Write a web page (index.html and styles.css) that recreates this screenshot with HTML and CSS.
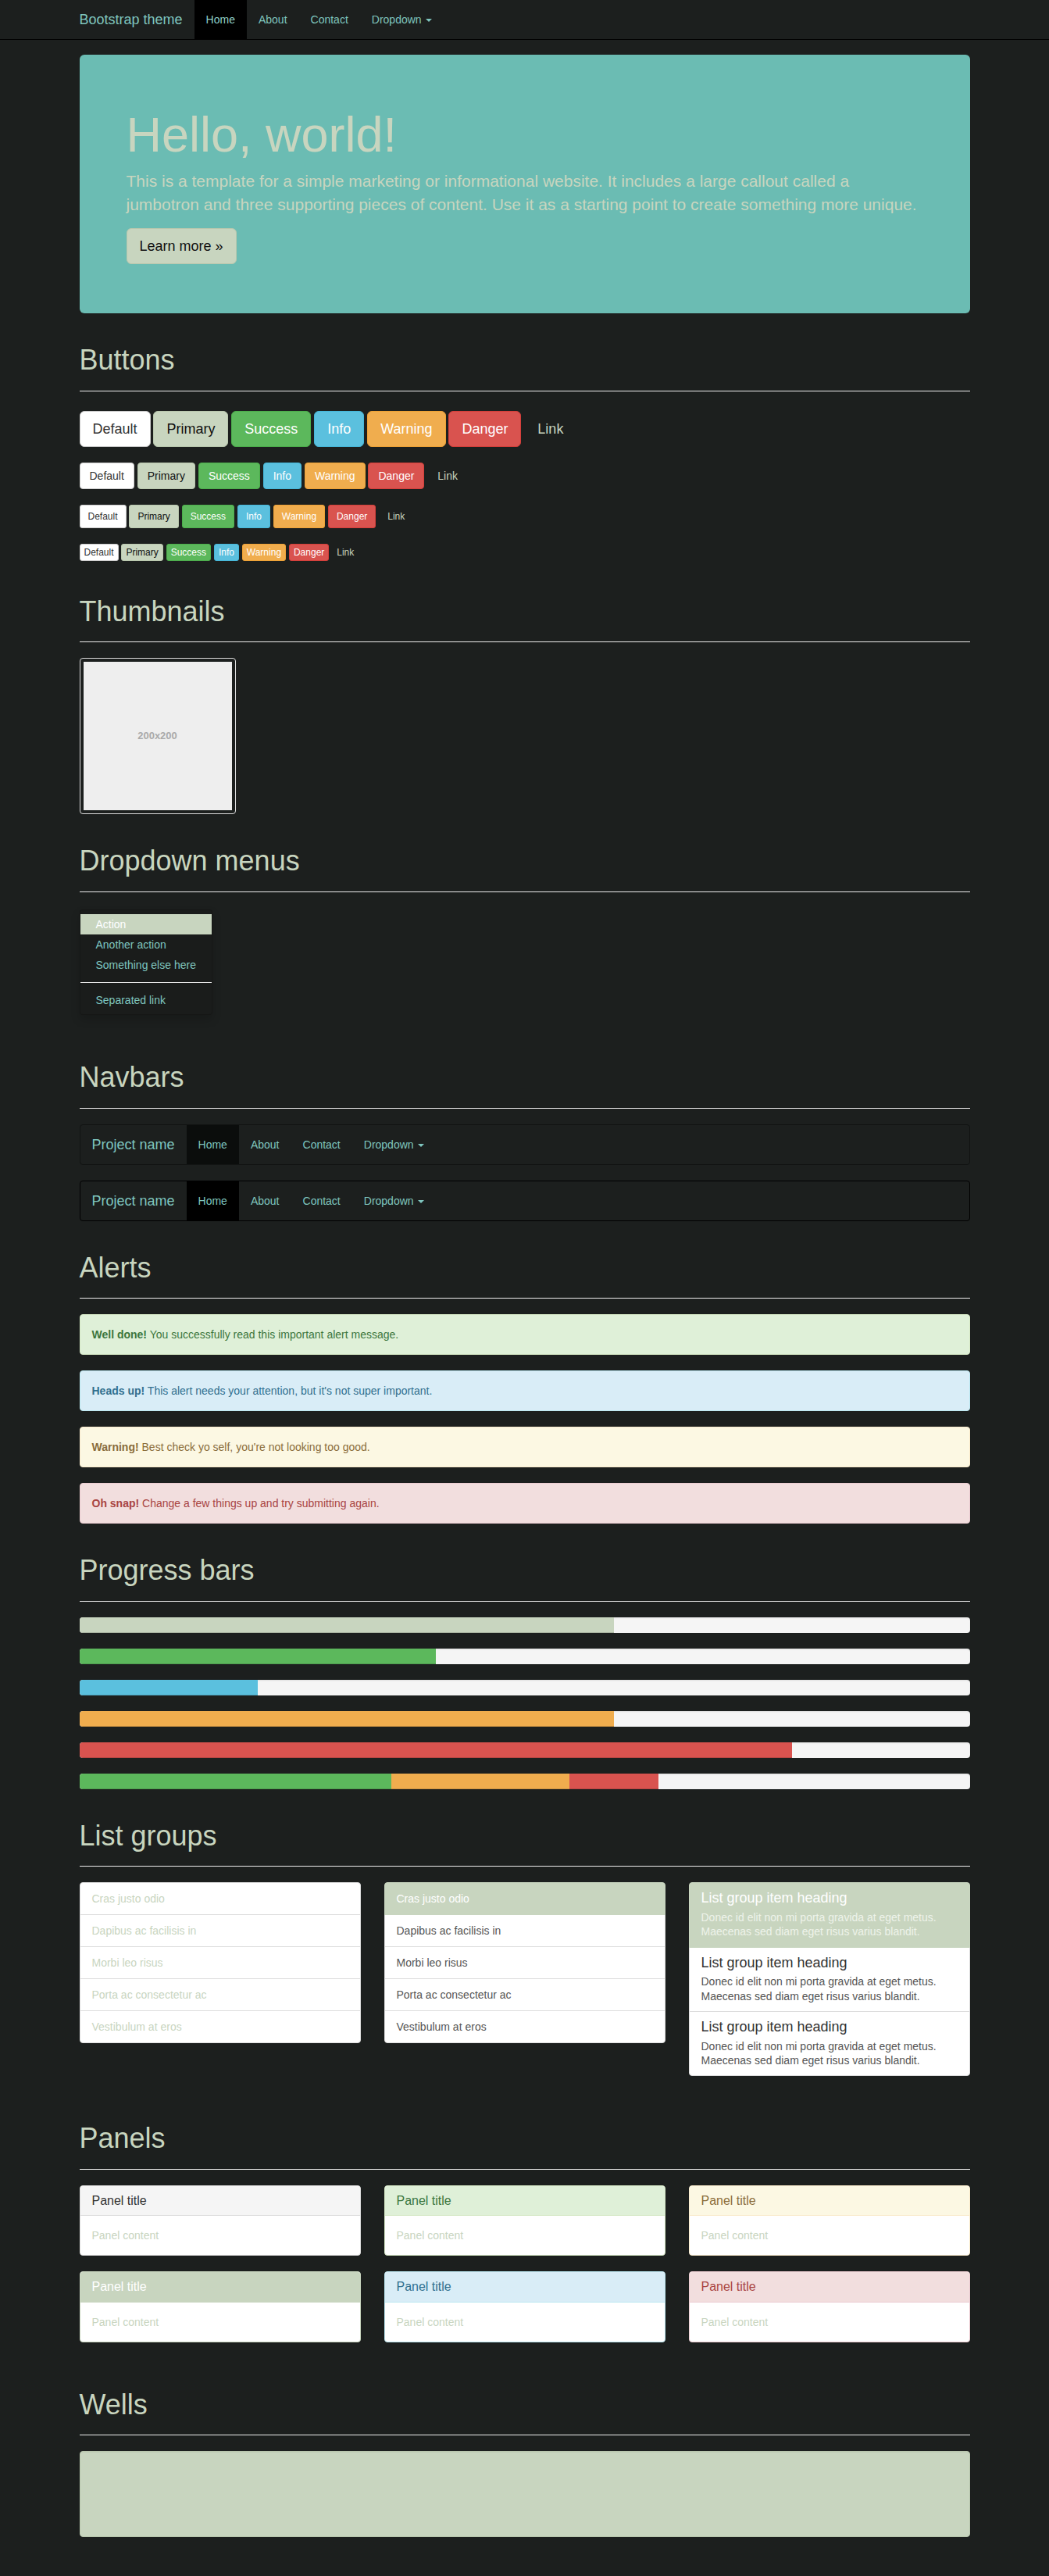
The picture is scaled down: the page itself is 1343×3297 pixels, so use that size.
FILE: index.html
```html
<!DOCTYPE html>
<html lang="en">
<head>
<meta charset="utf-8">
<title>Theme Template for Bootstrap</title>
<link rel="stylesheet" href="styles.css">
</head>
<body>
<nav class="topbar">
  <div class="topbar-inner">
    <a class="brand" href="#">Bootstrap theme</a>
    <ul class="nav">
      <li class="active"><a href="#">Home</a></li>
      <li><a href="#about">About</a></li>
      <li><a href="#contact">Contact</a></li>
      <li><a href="#">Dropdown <span class="caret"></span></a></li>
    </ul>
  </div>
</nav>

<div class="container theme-showcase">
  <div class="jumbotron">
    <h1>Hello, world!</h1>
    <p>This is a template for a simple marketing or informational website. It includes a large callout called a jumbotron and three supporting pieces of content. Use it as a starting point to create something more unique.</p>
    <p><a href="#" class="btn btn-primary btn-lg">Learn more &raquo;</a></p>
  </div>

  <div class="page-header"><h1>Buttons</h1></div>
  <p>
    <button type="button" class="btn btn-lg btn-default">Default</button>
    <button type="button" class="btn btn-lg btn-primary">Primary</button>
    <button type="button" class="btn btn-lg btn-success">Success</button>
    <button type="button" class="btn btn-lg btn-info">Info</button>
    <button type="button" class="btn btn-lg btn-warning">Warning</button>
    <button type="button" class="btn btn-lg btn-danger">Danger</button>
    <button type="button" class="btn btn-lg btn-link">Link</button>
  </p>
  <p>
    <button type="button" class="btn btn-default">Default</button>
    <button type="button" class="btn btn-primary">Primary</button>
    <button type="button" class="btn btn-success">Success</button>
    <button type="button" class="btn btn-info">Info</button>
    <button type="button" class="btn btn-warning">Warning</button>
    <button type="button" class="btn btn-danger">Danger</button>
    <button type="button" class="btn btn-link">Link</button>
  </p>
  <p>
    <button type="button" class="btn btn-sm btn-default">Default</button>
    <button type="button" class="btn btn-sm btn-primary">Primary</button>
    <button type="button" class="btn btn-sm btn-success">Success</button>
    <button type="button" class="btn btn-sm btn-info">Info</button>
    <button type="button" class="btn btn-sm btn-warning">Warning</button>
    <button type="button" class="btn btn-sm btn-danger">Danger</button>
    <button type="button" class="btn btn-sm btn-link">Link</button>
  </p>
  <p>
    <button type="button" class="btn btn-xs btn-default">Default</button>
    <button type="button" class="btn btn-xs btn-primary">Primary</button>
    <button type="button" class="btn btn-xs btn-success">Success</button>
    <button type="button" class="btn btn-xs btn-info">Info</button>
    <button type="button" class="btn btn-xs btn-warning">Warning</button>
    <button type="button" class="btn btn-xs btn-danger">Danger</button>
    <button type="button" class="btn btn-xs btn-link">Link</button>
  </p>

  <div class="page-header"><h1>Thumbnails</h1></div>
  <div class="img-thumbnail"><div class="holder">200x200</div></div>

  <div class="page-header"><h1>Dropdown menus</h1></div>
  <div class="theme-dropdown">
    <ul class="dropdown-menu">
      <li class="active"><a href="#">Action</a></li>
      <li><a href="#">Another action</a></li>
      <li><a href="#">Something else here</a></li>
      <li class="divider"></li>
      <li><a href="#">Separated link</a></li>
    </ul>
  </div>

  <div class="page-header"><h1>Navbars</h1></div>
  <nav class="navbar navbar-default">
    <a class="navbar-brand" href="#">Project name</a>
    <ul class="navbar-nav">
      <li class="active"><a href="#">Home</a></li>
      <li><a href="#about">About</a></li>
      <li><a href="#contact">Contact</a></li>
      <li><a href="#">Dropdown <span class="caret"></span></a></li>
    </ul>
  </nav>
  <nav class="navbar navbar-inverse">
    <a class="navbar-brand" href="#">Project name</a>
    <ul class="navbar-nav">
      <li class="active"><a href="#">Home</a></li>
      <li><a href="#about">About</a></li>
      <li><a href="#contact">Contact</a></li>
      <li><a href="#">Dropdown <span class="caret"></span></a></li>
    </ul>
  </nav>

  <div class="page-header"><h1>Alerts</h1></div>
  <div class="alert alert-success"><strong>Well done!</strong> You successfully read this important alert message.</div>
  <div class="alert alert-info"><strong>Heads up!</strong> This alert needs your attention, but it's not super important.</div>
  <div class="alert alert-warning"><strong>Warning!</strong> Best check yo self, you're not looking too good.</div>
  <div class="alert alert-danger"><strong>Oh snap!</strong> Change a few things up and try submitting again.</div>

  <div class="page-header"><h1>Progress bars</h1></div>
  <div class="progress"><div class="progress-bar" style="width: 60%"></div></div>
  <div class="progress"><div class="progress-bar progress-bar-success" style="width: 40%"></div></div>
  <div class="progress"><div class="progress-bar progress-bar-info" style="width: 20%"></div></div>
  <div class="progress"><div class="progress-bar progress-bar-warning" style="width: 60%"></div></div>
  <div class="progress"><div class="progress-bar progress-bar-danger" style="width: 80%"></div></div>
  <div class="progress">
    <div class="progress-bar progress-bar-success" style="width: 35%"></div>
    <div class="progress-bar progress-bar-warning" style="width: 20%"></div>
    <div class="progress-bar progress-bar-danger" style="width: 10%"></div>
  </div>

  <div class="page-header"><h1>List groups</h1></div>
  <div class="row">
    <div class="col">
      <ul class="list-group">
        <li class="list-group-item">Cras justo odio</li>
        <li class="list-group-item">Dapibus ac facilisis in</li>
        <li class="list-group-item">Morbi leo risus</li>
        <li class="list-group-item">Porta ac consectetur ac</li>
        <li class="list-group-item">Vestibulum at eros</li>
      </ul>
    </div>
    <div class="col">
      <div class="list-group">
        <a href="#" class="list-group-item link-item active">Cras justo odio</a>
        <a href="#" class="list-group-item link-item">Dapibus ac facilisis in</a>
        <a href="#" class="list-group-item link-item">Morbi leo risus</a>
        <a href="#" class="list-group-item link-item">Porta ac consectetur ac</a>
        <a href="#" class="list-group-item link-item">Vestibulum at eros</a>
      </div>
    </div>
    <div class="col">
      <div class="list-group">
        <a href="#" class="list-group-item link-item active">
          <h4 class="list-group-item-heading">List group item heading</h4>
          <p class="list-group-item-text">Donec id elit non mi porta gravida at eget metus. Maecenas sed diam eget risus varius blandit.</p>
        </a>
        <a href="#" class="list-group-item link-item">
          <h4 class="list-group-item-heading">List group item heading</h4>
          <p class="list-group-item-text">Donec id elit non mi porta gravida at eget metus. Maecenas sed diam eget risus varius blandit.</p>
        </a>
        <a href="#" class="list-group-item link-item">
          <h4 class="list-group-item-heading">List group item heading</h4>
          <p class="list-group-item-text">Donec id elit non mi porta gravida at eget metus. Maecenas sed diam eget risus varius blandit.</p>
        </a>
      </div>
    </div>
  </div>

  <div class="page-header"><h1>Panels</h1></div>
  <div class="row">
    <div class="col">
      <div class="panel panel-default">
        <div class="panel-heading"><h3 class="panel-title">Panel title</h3></div>
        <div class="panel-body">Panel content</div>
      </div>
      <div class="panel panel-primary">
        <div class="panel-heading"><h3 class="panel-title">Panel title</h3></div>
        <div class="panel-body">Panel content</div>
      </div>
    </div>
    <div class="col">
      <div class="panel panel-success">
        <div class="panel-heading"><h3 class="panel-title">Panel title</h3></div>
        <div class="panel-body">Panel content</div>
      </div>
      <div class="panel panel-info">
        <div class="panel-heading"><h3 class="panel-title">Panel title</h3></div>
        <div class="panel-body">Panel content</div>
      </div>
    </div>
    <div class="col">
      <div class="panel panel-warning">
        <div class="panel-heading"><h3 class="panel-title">Panel title</h3></div>
        <div class="panel-body">Panel content</div>
      </div>
      <div class="panel panel-danger">
        <div class="panel-heading"><h3 class="panel-title">Panel title</h3></div>
        <div class="panel-body">Panel content</div>
      </div>
    </div>
  </div>

  <div class="page-header"><h1>Wells</h1></div>
  <div class="well">
    <p>Sed posuere consectetur est at lobortis. Aenean eu leo quam. Pellentesque ornare sem lacinia quam venenatis vestibulum. Curabitur blandit tempus porttitor. Nullam quis risus eget urna mollis ornare vel eu leo. Cras mattis consectetur purus sit amet fermentum. Duis mollis, est non commodo luctus, nisi erat porttitor ligula, eget lacinia odio sem nec elit. Aenean lacinia bibendum nulla sed consectetur. Sed posuere consectetur est at lobortis. Aenean eu leo quam. Pellentesque ornare sem lacinia quam venenatis vestibulum.</p>
  </div>
</div>
</body>
</html>
```

FILE: styles.css
```css
* { box-sizing: border-box; }
html, body { margin: 0; }
body {
  background: #1c1f1e;
  color: #c8d5bf;
  font-family: "Liberation Sans", Arial, Helvetica, sans-serif;
  font-size: 14px;
  line-height: 1.42857143;
  padding-bottom: 30px;
}
a { color: #7fc6bf; text-decoration: none; }
p { margin: 0 0 10px; }
ul { margin: 0; padding: 0; list-style: none; }

/* top navbar */
.topbar {
  height: 51px;
  background: #1c1f1e;
  border-bottom: 1px solid #000;
}
.topbar-inner {
  width: 1170px;
  margin: 0 auto;
  padding: 0 15px;
  display: flex;
  height: 50px;
}
.brand, .navbar-brand {
  display: block;
  margin-left: -15px;
  padding: 15px;
  height: 50px;
  font-size: 18px;
  line-height: 20px;
  color: #7fc6bf;
}
.nav, .navbar-nav { display: flex; }
.nav a, .navbar-nav a {
  display: block;
  padding: 15px;
  line-height: 20px;
  color: #7fc6bf;
}
.nav .active a { background: #000; color: #8fd0c9; }
.caret {
  display: inline-block;
  width: 0;
  height: 0;
  margin-left: 2px;
  vertical-align: middle;
  border-top: 4px solid;
  border-right: 4px solid transparent;
  border-left: 4px solid transparent;
}

/* container */
.container {
  width: 1170px;
  margin: 0 auto;
  padding: 19px 15px 0;
}

/* jumbotron */
.jumbotron {
  background: #6bbcb3;
  border-radius: 6px;
  padding: 48px 60px;
  margin-bottom: 30px;
}
.jumbotron h1 {
  font-size: 63px;
  line-height: 1.1;
  font-weight: 500;
  margin: 20px 0 10px;
}
.jumbotron p {
  font-size: 21px;
  font-weight: 200;
  margin-bottom: 15px;
}

/* page headers */
.page-header {
  padding-bottom: 9px;
  margin: 40px 0 20px;
  border-bottom: 1px solid #eee;
}
.page-header h1 {
  margin: 20px 0 10px;
  font-size: 36px;
  line-height: 1.1;
  font-weight: 500;
  color: #c8d5bf;
}

/* buttons */
.btn {
  display: inline-block;
  margin: 5px 0;
  padding: 6px 12px;
  font-family: inherit;
  font-size: 14px;
  font-weight: 400;
  line-height: 1.42857143;
  text-align: center;
  white-space: nowrap;
  vertical-align: middle;
  cursor: pointer;
  border: 1px solid transparent;
  border-radius: 4px;
  background: none;
}
.jumbotron .btn { margin: 0; }
.btn-lg { padding: 10px 16px; font-size: 18px; line-height: 1.3333333; border-radius: 6px; }
.btn-sm { padding: 5px 10px; font-size: 12px; line-height: 1.5; border-radius: 3px; }
.btn-xs { padding: 1px 5px; font-size: 12px; line-height: 1.5; border-radius: 3px; }
.btn-default { color: #333; background: #fff; border-color: #ccc; }
.btn-primary { color: #111; background: #c8d5bf; border-color: #b9c8ae; }
.btn-success { color: #fff; background: #5cb85c; border-color: #4cae4c; }
.btn-info { color: #fff; background: #5bc0de; border-color: #46b8da; }
.btn-warning { color: #fff; background: #f0ad4e; border-color: #eea236; }
.btn-danger { color: #fff; background: #d9534f; border-color: #d43f3a; }
.btn-link { color: #c8d5bf; }

/* thumbnail */
.img-thumbnail {
  width: 200px;
  height: 200px;
  padding: 4px;
  border: 1px solid #ddd;
  border-radius: 4px;
  background: #1c1f1e;
}
.holder {
  height: 100%;
  background: #eee;
  color: #aaa;
  font-weight: bold;
  font-size: 13px;
  display: flex;
  align-items: center;
  justify-content: center;
}

/* dropdown */
.theme-dropdown { display: flow-root; }
.dropdown-menu {
  width: max-content;
  min-width: 160px;
  padding: 5px 0;
  margin: 2px 0 20px;
  background: #1a1c1b;
  border: 1px solid rgba(0, 0, 0, .15);
  border-radius: 4px;
  box-shadow: 0 6px 12px rgba(0, 0, 0, .175);
}
.dropdown-menu a {
  display: block;
  padding: 3px 20px;
  line-height: 20px;
  white-space: nowrap;
  color: #7fc6bf;
}
.dropdown-menu .active a { background: #c8d5bf; color: #fff; }
.dropdown-menu .divider { height: 1px; margin: 9px 0; background: #e5e5e5; }

/* navbars */
.navbar {
  display: flex;
  min-height: 52px;
  margin-bottom: 20px;
  padding: 0 15px;
  border: 1px solid #111312;
  border-radius: 4px;
  background: #1c1f1e;
}
.navbar-default .active a { background: #0b0d0c; }
.navbar-inverse { border-color: #000; }
.navbar-inverse .active a { background: #000; }

/* alerts */
.alert {
  padding: 15px;
  margin-bottom: 20px;
  border: 1px solid transparent;
  border-radius: 4px;
}
.alert-success { color: #3c763d; background: #dff0d8; border-color: #d6e9c6; }
.alert-info { color: #31708f; background: #d9edf7; border-color: #bce8f1; }
.alert-warning { color: #8a6d3b; background: #fcf8e3; border-color: #faebcc; }
.alert-danger { color: #a94442; background: #f2dede; border-color: #ebccd1; }

/* progress */
.progress {
  display: flex;
  height: 20px;
  margin-bottom: 20px;
  overflow: hidden;
  background: #f5f5f5;
  border-radius: 4px;
  box-shadow: inset 0 1px 2px rgba(0, 0, 0, .1);
}
.progress-bar {
  height: 100%;
  background: #c8d5bf;
  box-shadow: inset 0 -1px 0 rgba(0, 0, 0, .15);
}
.progress-bar-success { background: #5cb85c; }
.progress-bar-info { background: #5bc0de; }
.progress-bar-warning { background: #f0ad4e; }
.progress-bar-danger { background: #d9534f; }

/* grid */
.row {
  display: grid;
  grid-template-columns: repeat(3, 1fr);
  column-gap: 30px;
  align-items: start;
}

/* list groups */
.list-group { margin-bottom: 20px; }
.list-group-item {
  position: relative;
  display: block;
  padding: 10px 15px;
  margin-bottom: -1px;
  background: #fff;
  border: 1px solid #ddd;
}
.list-group-item:first-child { border-top-left-radius: 4px; border-top-right-radius: 4px; }
.list-group-item:last-child { margin-bottom: 0; border-bottom-left-radius: 4px; border-bottom-right-radius: 4px; }
.link-item { color: #555; }
.list-group-item.active { z-index: 2; color: #fff; background: #c8d5bf; border-color: #c8d5bf; }
.list-group-item-heading {
  margin: 0 0 5px;
  font-size: 18px;
  line-height: 1.1;
  font-weight: 500;
  color: #333;
}
.list-group-item-text { margin: 0; line-height: 1.3; }
.list-group-item.active .list-group-item-heading { color: #fff; }
.list-group-item.active .list-group-item-text { color: #eef3ea; }

/* panels */
.panel {
  margin-bottom: 20px;
  background: #fff;
  border: 1px solid transparent;
  border-radius: 4px;
  box-shadow: 0 1px 1px rgba(0, 0, 0, .05);
}
.panel-heading {
  padding: 10px 15px;
  border-bottom: 1px solid transparent;
  border-top-left-radius: 3px;
  border-top-right-radius: 3px;
}
.panel-title { margin: 0; font-size: 16px; line-height: 1.1; font-weight: 500; }
.panel-body { padding: 15px; }
.panel-default { border-color: #ddd; }
.panel-default .panel-heading { color: #333; background: #f5f5f5; border-color: #ddd; }
.panel-primary { border-color: #c8d5bf; }
.panel-primary .panel-heading { color: #fff; background: #c8d5bf; border-color: #c8d5bf; }
.panel-success { border-color: #d6e9c6; }
.panel-success .panel-heading { color: #3c763d; background: #dff0d8; border-color: #d6e9c6; }
.panel-info { border-color: #bce8f1; }
.panel-info .panel-heading { color: #31708f; background: #d9edf7; border-color: #bce8f1; }
.panel-warning { border-color: #faebcc; }
.panel-warning .panel-heading { color: #8a6d3b; background: #fcf8e3; border-color: #faebcc; }
.panel-danger { border-color: #ebccd1; }
.panel-danger .panel-heading { color: #a94442; background: #f2dede; border-color: #ebccd1; }

/* well */
.well {
  min-height: 20px;
  padding: 19px;
  margin-bottom: 20px;
  background: #c8d5bf;
  border: 1px solid #b9c8ae;
  border-radius: 4px;
  box-shadow: inset 0 1px 1px rgba(0, 0, 0, .05);
}
```
